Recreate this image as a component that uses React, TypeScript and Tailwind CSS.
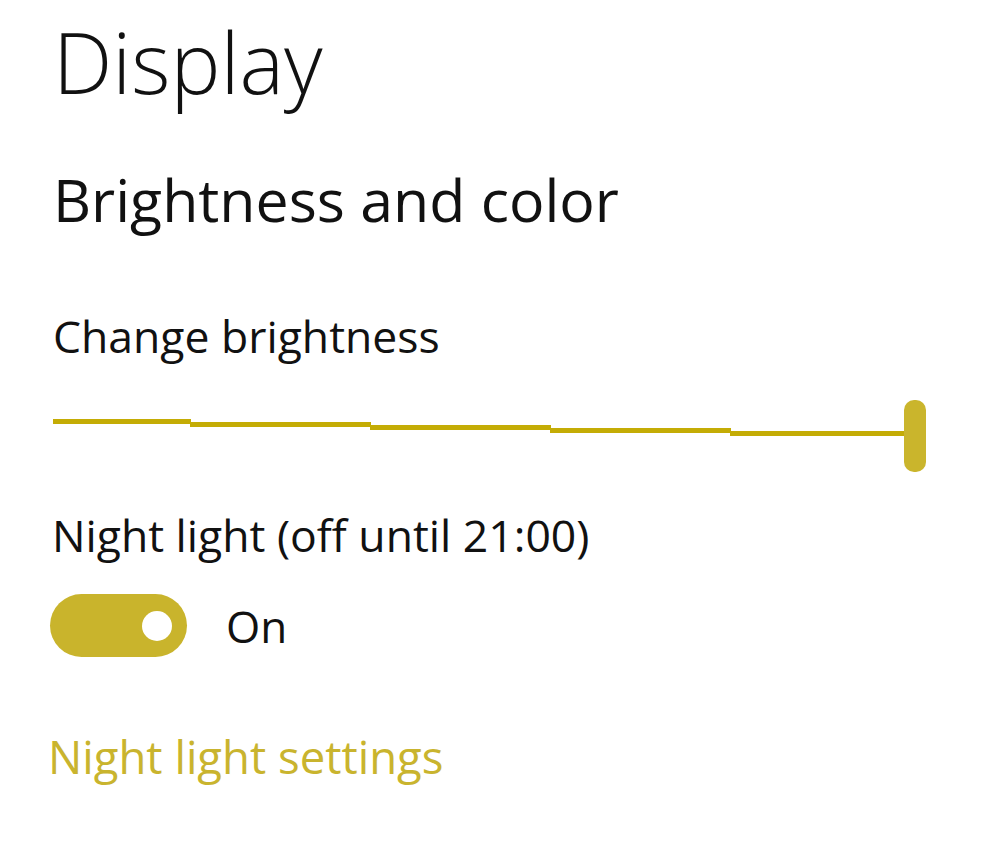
export default function App() {
    // slider steps: stair-stepped track (the screenshot was slightly rotated)
    const steps = [
        { x1: 0, x2: 137, y: 21 },
        { x1: 137, x2: 317, y: 24 },
        { x1: 317, x2: 497, y: 27 },
        { x1: 497, x2: 677, y: 30 },
        { x1: 677, x2: 855, y: 33 },
    ]

    return (
        <div
            className="min-h-screen w-full bg-white pl-[53px] pt-[20px] text-[#111]"
            style={{ fontFamily: '"Open Sans", "Noto Sans", sans-serif' }}
        >
            <h1 className="text-[84px] leading-[84px] font-light">Display</h1>

            <h2 className="mt-[66px] text-[59px] leading-[59px] font-normal">Brightness and color</h2>

            <div className="mt-[84px] text-[44.5px] leading-[45px]">Change brightness</div>

            <div className="mt-[42px] h-[72px] w-[873px]">
                <svg width="873" height="72" viewBox="0 0 873 72">
                    {steps.map((s, i) => (
                        <rect key={i} x={s.x1} y={s.y - 2} width={s.x2 - s.x1 + 1} height="5" fill="#c4ac05" />
                    ))}
                    <rect x="851" y="0" width="22" height="72" rx="10" fill="#cab52c" />
                </svg>
            </div>

            <div className="-ml-px mt-[40px] text-[44.5px] leading-[45px]">Night light (off until 21:00)</div>

            <div className="-ml-[3px] mt-[37px] flex h-[63px] items-center">
                <div className="flex h-[63px] w-[137px] items-center justify-end rounded-full bg-[#c9b42c] pr-[15px]">
                    <div className="h-[30px] w-[30px] rounded-full bg-white" />
                </div>
                <span className="ml-[39px] text-[44px] leading-[46px]">On</span>
            </div>

            <div className="-ml-[5px] mt-[76px] text-[45.5px] leading-[46px] text-[#c9b42e]">Night light settings</div>
        </div>
    )
}
